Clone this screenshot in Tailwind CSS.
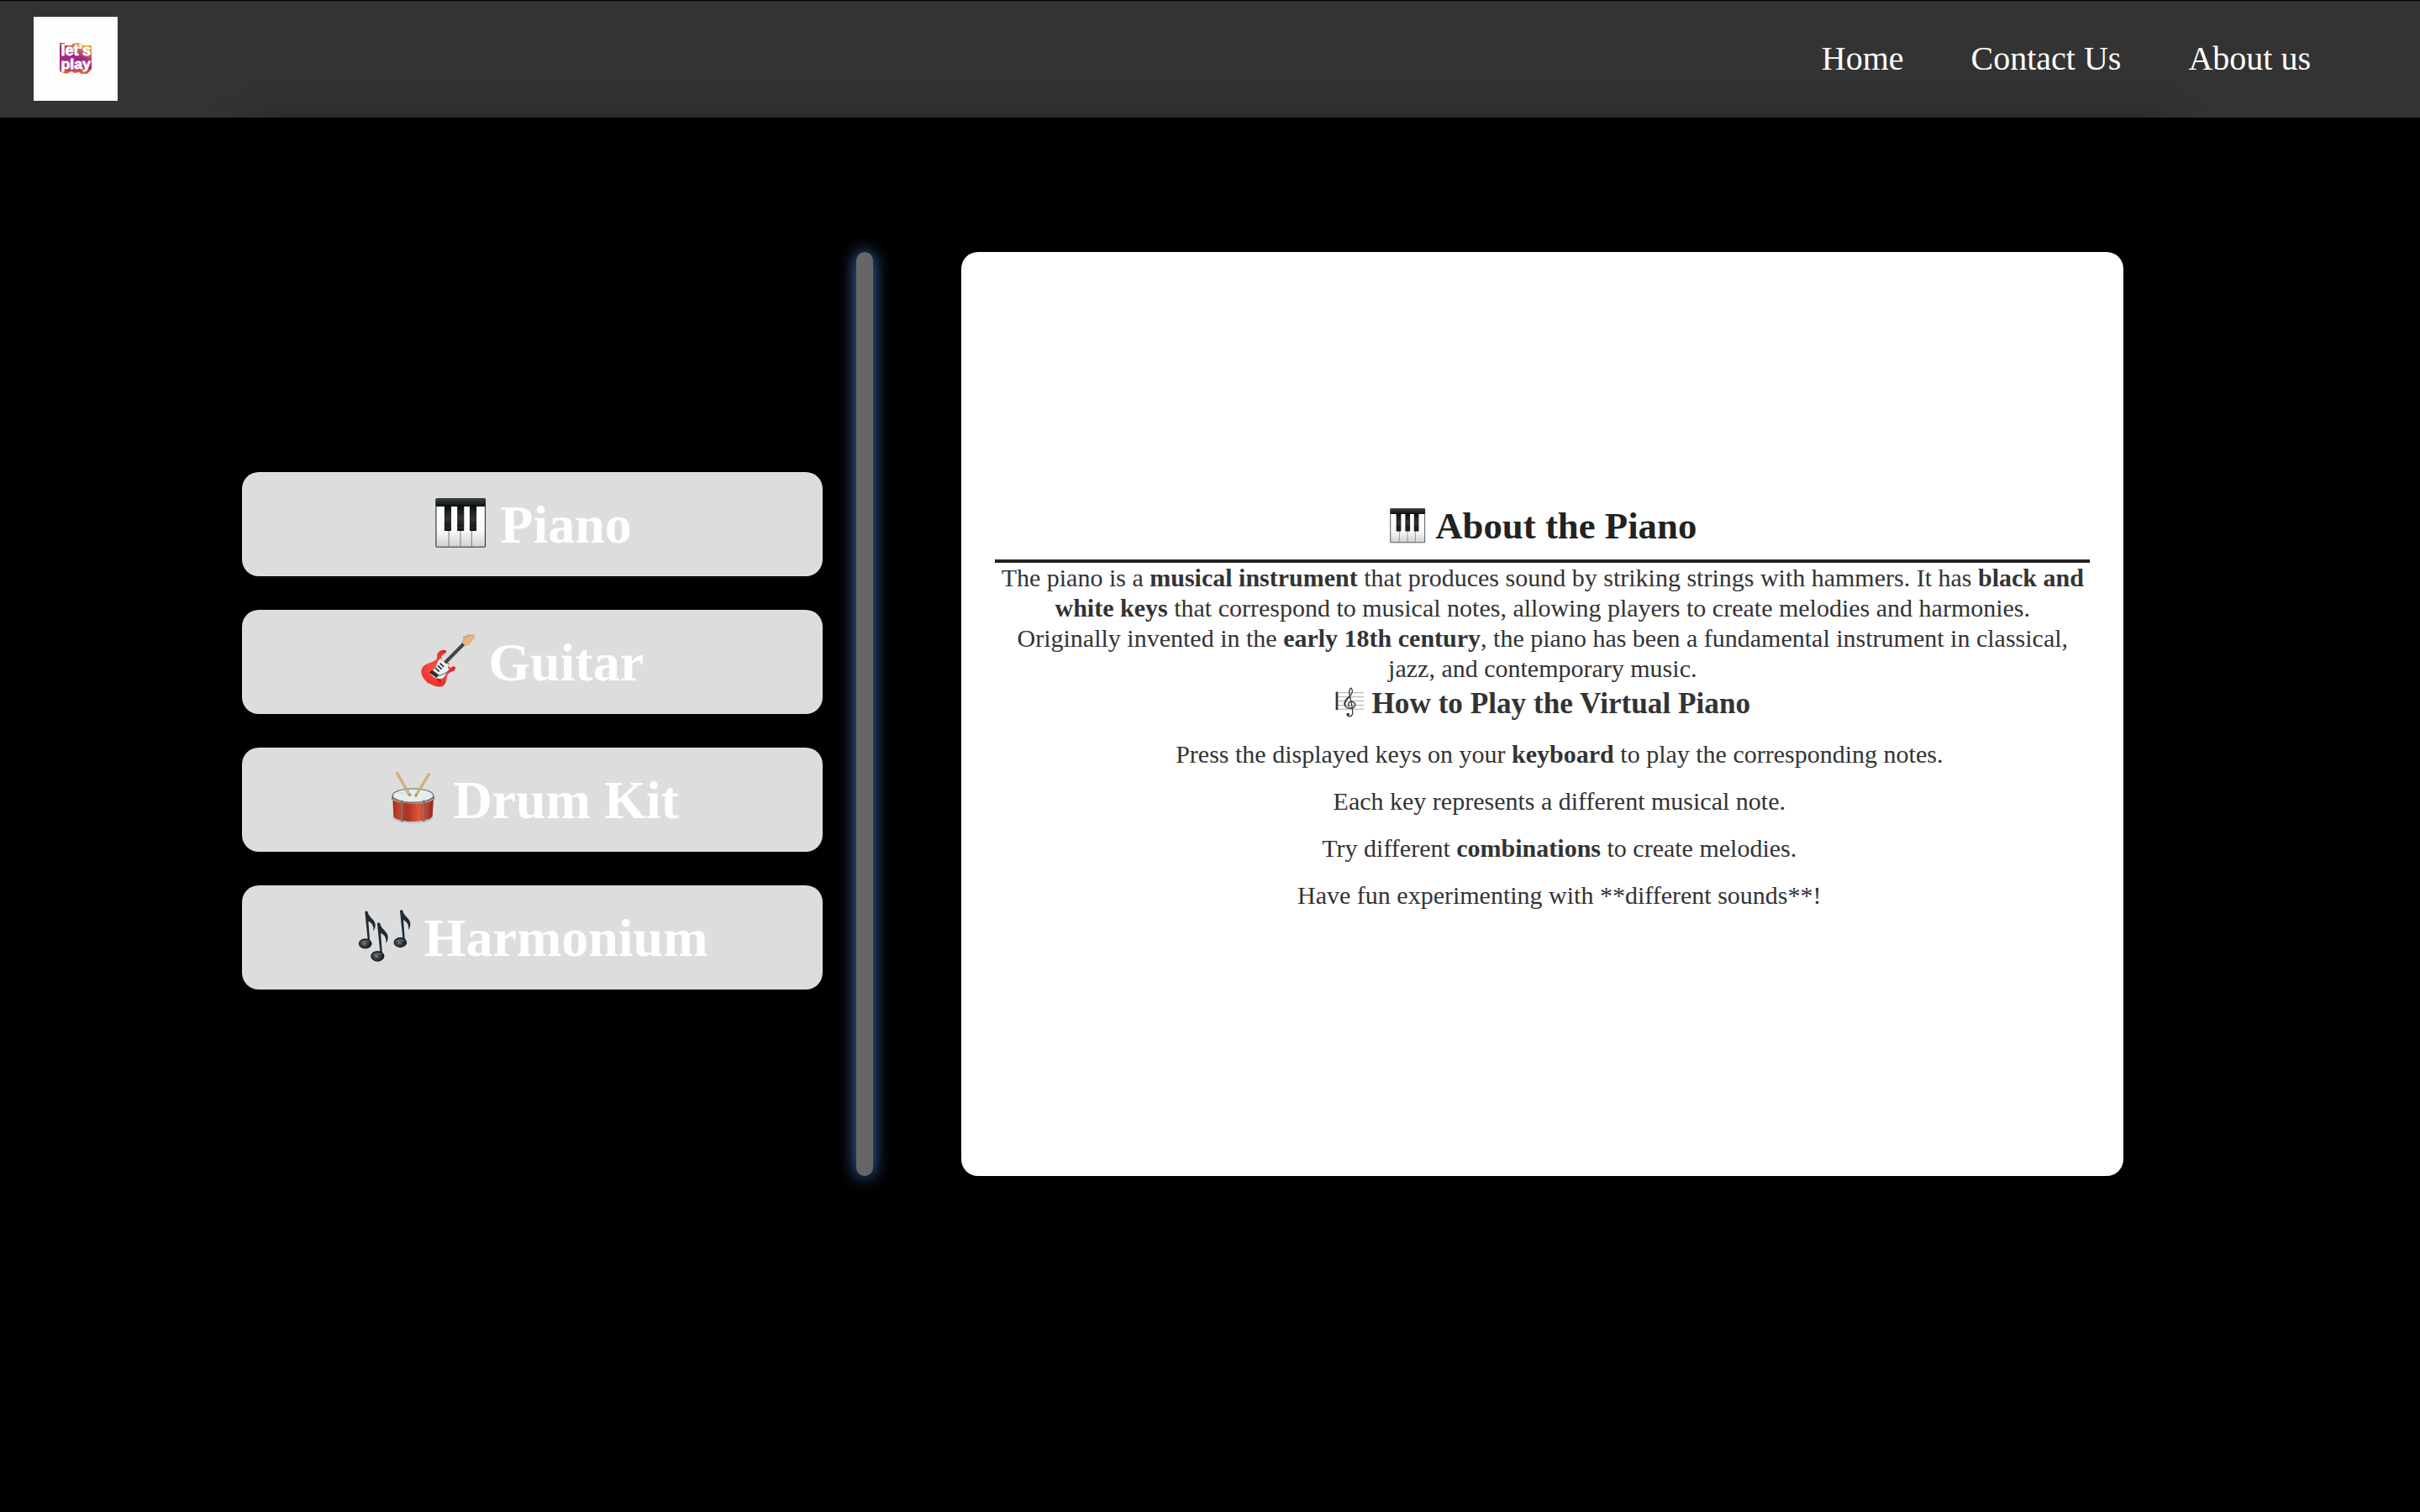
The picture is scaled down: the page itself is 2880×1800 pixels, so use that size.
<!DOCTYPE html>
<html lang="en">
<head>
<meta charset="utf-8">
<title>Let's Play</title>
<script src="https://cdn.jsdelivr.net/npm/@tailwindcss/browser@4"></script>
</head>
<body class="min-h-screen overflow-hidden bg-black font-['Liberation_Serif',serif]">
<svg class="absolute size-0" aria-hidden="true">
  <defs>
    <linearGradient id="lid" x1="0" y1="0" x2="0" y2="1"><stop offset="0" stop-color="#3a4243"/><stop offset="1" stop-color="#0c0f10"/></linearGradient>
    <linearGradient id="ivory" x1="0" y1="0" x2="0" y2="1"><stop offset="0" stop-color="#fff"/><stop offset=".6" stop-color="#fafafa"/><stop offset="1" stop-color="#d2d2d2"/></linearGradient>
    <linearGradient id="ebony" x1="0" y1="0" x2="0" y2="1"><stop offset="0" stop-color="#090a0a"/><stop offset=".5" stop-color="#303334"/><stop offset="1" stop-color="#0c0d0d"/></linearGradient>
    <symbol id="piano" viewBox="35 38 134 134">
      <rect x="42" y="44.500" width="125" height="123" rx="4" fill="#373b3c"/>
      <rect x="44.500" y="64" width="120" height="101" fill="url(#ivory)"/>
      <rect x="42.500" y="45" width="124" height="20" rx="3" fill="url(#lid)"/>
      <path d="M75 124V165M104 124V165M132 124V165" stroke="#777" stroke-width="2"/>
      <g fill="url(#ebony)"><rect x="64" y="62" width="17" height="64" rx="1"/><rect x="96" y="62" width="17" height="64" rx="1"/><rect x="127" y="62" width="17" height="64" rx="1"/></g>
      <path d="M66 119h13M98 119h13M129 119h13" stroke="#555" stroke-width="1.500"/>
    </symbol>
  </defs>
</svg>

<header class="mt-px flex h-[139px] items-center justify-between bg-[#333] pr-[130px] pb-px pl-10">
  <svg class="size-[100px] bg-[#fcfdfd]" viewBox="0 0 100 100">
    <defs>
      <linearGradient id="brand" x1="0" y1="1" x2=".6" y2="0"><stop offset="0" stop-color="#b0288c"/><stop offset=".6" stop-color="#9c2683"/><stop offset="1" stop-color="#f2a33a"/></linearGradient>
      <linearGradient id="drip" x1="0" y1="0" x2="0" y2="1"><stop offset="0" stop-color="#a62b80"/><stop offset=".5" stop-color="#d4483f"/><stop offset="1" stop-color="#e8703c"/></linearGradient>
    </defs>
    <path d="M31 60H69V62L64 68H57L54 66L49 67L45 65L39 68L31 65Z" fill="url(#drip)"/>
    <path d="M31 31H37V34H46V32L52 31L58 32V34H69V62H31Z" fill="url(#brand)"/>
    <g font-family="Liberation Sans" font-weight="bold" fill="#fff" stroke="#fff" stroke-width=".8">
      <text x="32.500" y="46" font-size="18" textLength="35.500" lengthAdjust="spacingAndGlyphs">let's</text>
      <text x="32.500" y="61.500" font-size="17" textLength="35.500" lengthAdjust="spacingAndGlyphs">play</text>
    </g>
  </svg>
  <nav class="flex gap-20 text-[40px] leading-[46px] text-white">
    <a>Home</a><a>Contact Us</a><a>About us</a>
  </nav>
</header>

<main class="relative mx-auto mt-5 flex h-[1380px] w-[2304px] pt-[140px] shadow-[0_0_40px_rgba(0,0,0,0.8)]">
  <section class="flex w-[691.2px] flex-col gap-10 pt-[262px] text-[64px] leading-[74px] font-bold text-white">
    <button class="flex h-[124px] items-center justify-center gap-4 rounded-[20px] bg-[#ddd] pt-[2px]">
      <svg class="mb-[6px] size-16"><use href="#piano"/></svg>Piano
    </button>
    <button class="flex h-[124px] items-center justify-center gap-4 rounded-[20px] bg-[#ddd] pt-[2px]">
      <svg class="mb-1 size-16" viewBox="63 45 192 192">
        <defs><radialGradient id="redbody" cx=".4" cy=".5" r=".65"><stop offset="0" stop-color="#fb5447"/><stop offset=".7" stop-color="#ee332c"/><stop offset="1" stop-color="#c0201d"/></radialGradient></defs>
        <path d="M84 211l6 9" stroke="#555" stroke-width="4"/>
        <path d="M153 104C147 99 132 101 124 111C117 120 124 130 116 137C103 147 74 149 66 168C59 190 73 210 95 222C114 234 136 237 147 225C157 214 151 199 160 187C168 177 186 180 186 165C184 155 175 161 168 164C163 165 159 158 164 150L151 140C144 146 135 139 136 126C138 115 157 115 153 104Z" fill="url(#redbody)"/>
        <path d="M134 131C136 139 143 145 150 143L162 154C157 162 160 170 166 171C151 180 152 193 142 202C130 207 112 204 99 188C94 178 107 174 114 164C123 151 118 141 134 131Z" fill="#edf0f0"/>
        <path d="M149 147L216 79" stroke="#34383b" stroke-width="12"/>
        <path d="M149 147L216 79" stroke="#83898b" stroke-width="11" stroke-dasharray="1.500 7"/>
        <path d="M209 75L217 61C222 53 237 50 248 47C256 48 255 58 250 62C242 64 244 72 237 79C231 84 227 81 220 85Z" fill="#efb37b" stroke="#c58144" stroke-width="1.500"/>
        <path d="M213 58L240 46M214 52l4 9M221 49l4 8M229 45l4 8M236 42l4 8" stroke="#979b9e" stroke-width="2.500"/>
        <path d="M131 149l14 13M123 157l14 13M114 165l14 13" stroke="#22272a" stroke-width="5"/>
        <path d="M98 177l25 19" stroke="#1f2326" stroke-width="13"/><path d="M99 174l23 18" stroke="#6c7275" stroke-width="2"/>
        <path d="M120 193Q143 193 167 171" fill="none" stroke="#4c5154" stroke-width="3"/>
        <path d="M119 210q6-6 11 0M128 219l4-5M134 211l-3 3" fill="none" stroke="#801e1e" stroke-width="4"/>
      </svg>Guitar
    </button>
    <button class="flex h-[124px] items-center justify-center gap-4 rounded-[20px] bg-[#ddd] pt-[2px]">
      <svg class="mb-1 size-16" viewBox="28 57 192 192">
        <defs><linearGradient id="shell"><stop offset="0" stop-color="#9c2f20"/><stop offset=".15" stop-color="#c8452e"/><stop offset=".35" stop-color="#a93420"/><stop offset=".65" stop-color="#df5737"/><stop offset=".85" stop-color="#bd3e28"/><stop offset="1" stop-color="#8a2618"/></linearGradient></defs>
        <path d="M54 205Q57 240 125 241Q193 240 196 205V220Q190 239 125 241Q60 239 54 220Z" fill="#aeb2b5"/>
        <path d="M53 150H199L195 215Q185 233 125 234Q65 233 56 215Z" fill="url(#shell)"/>
        <path d="M54 213Q61 234 125 235.500Q189 234 196 213V220Q187 240 125 241Q63 240 54 220Z" fill="#c0c4c7"/>
        <path d="M50 141C50 177 201 177 201 141V151C198 176 53 176 50 151Z" fill="#b1b5b8"/>
        <ellipse cx="125.500" cy="141" rx="75.500" ry="26" fill="#777d81"/>
        <ellipse cx="125.500" cy="141" rx="71" ry="22.500" fill="#e4edf0"/>
        <path d="M75 129L119 141M91 123L113 135" stroke="#c5d1d6" stroke-width="3"/>
        <path d="M86 158V235M164 158V235" stroke="#5b6063" stroke-width="6"/><path d="M85 158V235M163 158V235" stroke="#9a9ea1" stroke-width="2"/>
        <path d="M52 144v12M199 144v12" stroke="#565b60" stroke-width="4"/>
        <g stroke-linecap="round"><path d="M69 62L113 138M182 66L137 139" stroke="#a57a35" stroke-width="8"/><path d="M69 62L113 138M182 66L137 139" stroke="#e9c77d" stroke-width="4.500"/></g>
        <circle cx="114" cy="139" r="5" fill="#b98b42"/><circle cx="136" cy="141" r="5" fill="#b98b42"/>
      </svg>Drum Kit
    </button>
    <button class="flex h-[124px] items-center justify-center gap-4 rounded-[20px] bg-[#ddd] pt-[2px]">
      <svg class="mb-1 size-16 overflow-visible" viewBox="44 69 192 192">
        <defs>
          <radialGradient id="head" cx=".42" cy=".5" r=".6"><stop offset="0" stop-color="#7c858c"/><stop offset=".4" stop-color="#333c45"/><stop offset="1" stop-color="#10161d"/></radialGradient>
          <g id="note">
            <path d="M-6 -113Q-1 -120 4 -113C7 -99 18 -92 26 -81C35 -68 31 -54 24 -44C27 -61 20 -74 6 -80L12 -3H5Z" fill="#202a35"/>
            <ellipse cx="-5" cy="0" rx="23.500" ry="18.500" fill="url(#head)"/>
            <path d="M-20 -5Q-5 -13 9 -7" fill="none" stroke="#9aa2a9" stroke-width="2"/>
          </g>
        </defs>
        <use href="#note" transform="translate(78 190)"/>
        <use href="#note" transform="translate(203 186)"/>
        <g transform="translate(122 235) scale(1.030)"><use href="#note"/></g>
      </svg>Harmonium
    </button>
  </section>

  <div class="ml-10 h-[1100px] w-5 shrink-0 rounded-[10px] bg-[#666] shadow-[0_0_20px_#4478d0]"></div>

  <article class="ml-[105.200px] h-[1100px] w-[1382.8px] shrink-0 rounded-[20px] bg-white px-10 pt-[300px] text-center text-[30px] leading-9 text-[#333]">
    <h2 class="flex items-center justify-center gap-[11.2px] border-b-4 border-[#222] pb-[14px] text-[44.8px] leading-[52px] font-bold text-[#222]">
      <svg class="mb-[2px] size-[44.8px]"><use href="#piano"/></svg>About the Piano
    </h2>
    <p class="whitespace-nowrap">The piano is a <b>musical instrument</b> that produces sound by striking strings with hammers. It has <b>black and<br>white keys</b> that correspond to musical notes, allowing players to create melodies and harmonies.</p>
    <p class="whitespace-nowrap">Originally invented in the <b>early 18th century</b>, the piano has been a fundamental instrument in classical,<br>jazz, and contemporary music.</p>
    <h3 class="flex items-center justify-center gap-[8.8px] pt-px text-[35.2px] leading-[46px] font-bold">
      <svg class="mb-[4px] size-[35.2px]" viewBox="55 38 106 106">
        <path d="M60 58H161M60 73H161M60 88H161M60 103H161M60 117H161" stroke="#999" stroke-width="2.500"/>
        <path d="M64 55V120" stroke="#333" stroke-width="8"/>
        <path d="M104 137C98 147 117 144 120 135C123 123 113 80 109 63C106 49 112 40 116 42C123 51 118 64 107 74C98 82 91 91 92 101C94 114 118 119 127 108C134 97 123 87 112 91C102 95 103 107 111 109" fill="none" stroke="#3b3b3b" stroke-width="4"/>
        <path d="M110 72C95 83 90 93 93 103" fill="none" stroke="#333" stroke-width="6"/>
        <circle cx="104" cy="136" r="5.500" fill="#333"/>
      </svg>How to Play the Virtual Piano
    </h3>
    <ul class="mt-[9px] pl-10">
      <li class="py-[10px]">Press the displayed keys on your <b>keyboard</b> to play the corresponding notes.</li>
      <li class="py-[10px]">Each key represents a different musical note.</li>
      <li class="py-[10px]">Try different <b>combinations</b> to create melodies.</li>
      <li class="py-[10px]">Have fun experimenting with **different sounds**!</li>
    </ul>
  </article>
</main>
</body>
</html>
